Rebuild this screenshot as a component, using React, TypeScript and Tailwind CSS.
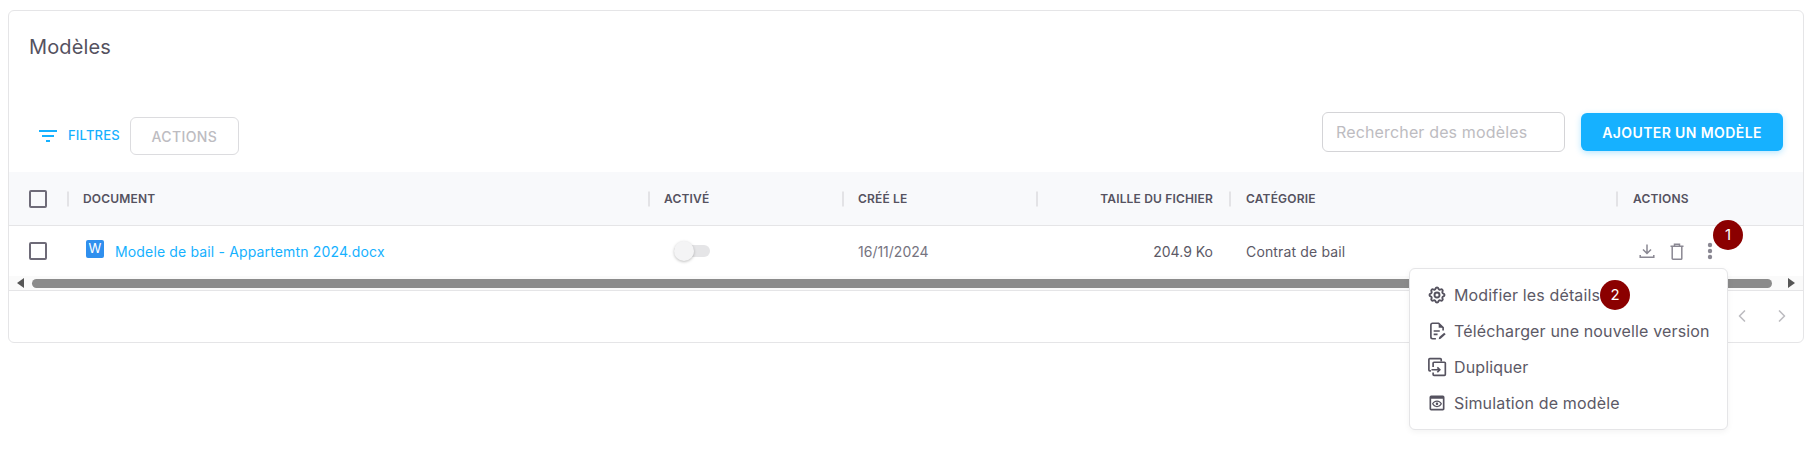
import { ChevronLeft, ChevronRight } from 'lucide-react';
import { MdFilterList, MdOutlinePreview } from 'react-icons/md';
import { TbSettings } from 'react-icons/tb';

const COLUMNS = 'grid grid-cols-[58px_581px_194px_194px_193px_387px_1fr]';

const HEADERS = [
  { label: 'DOCUMENT', cell: 'px-[16px]' },
  { label: 'ACTIVÉ', cell: 'px-[16px]' },
  { label: 'CRÉÉ LE', cell: 'px-[16px]' },
  { label: 'TAILLE DU FICHIER', cell: 'px-[16px] text-right' },
  { label: 'CATÉGORIE', cell: 'px-[17px]' },
  { label: 'ACTIONS', cell: 'px-[17px]' },
];

function Divider() {
  return <span className="absolute left-0 top-1/2 h-[15px] w-[2px] -translate-y-1/2 bg-[#e3e3e6]" />;
}

function Checkbox() {
  return <span className="block h-[18px] w-[18px] rounded-[2px] border-2 border-[#6e6b78]" />;
}

function EditFileIcon() {
  return (
    <svg width="20" height="20" viewBox="0 0 18 18" fill="none" stroke="#55525f" strokeWidth="1.5">
      <path d="M8 16H5a1.500 1.500 0 0 1-1.500-1.500v-11A1.500 1.500 0 0 1 5 2h5.500l4 4v2.500" strokeLinejoin="round" />
      <path d="M10.500 2l4 4h-4z" fill="#55525f" stroke="none" />
      <path d="M6 9h5.500M6 12h3.500" />
      <path d="M10.500 16.500l.5-2 4.500-4 1.300 1.400-4.500 4z" fill="#55525f" stroke="none" />
    </svg>
  );
}

function DuplicateIcon() {
  return (
    <svg width="20" height="20" viewBox="0 0 18 18" fill="none" stroke="#55525f" strokeWidth="1.500">
      <path d="M3.500 12.500H2.500a.8.8 0 0 1-.8-.8V2.300a.8.8 0 0 1 .8-.8h9.500a.8.8 0 0 1 .8.8V4" />
      <path d="M5.500 9V5.500a.8.8 0 0 1 .8-.8h9.400a.8.8 0 0 1 .8.8v10.200a.8.8 0 0 1-.8.8H6.300a.8.8 0 0 1-.8-.8V14" />
      <path d="M4 11.500h7.500M9.300 9.300l2.200 2.200-2.200 2.200" />
    </svg>
  );
}

function DownloadIcon() {
  return (
    <svg width="16" height="16" viewBox="0 0 16 16" fill="none" stroke="#8a8893" strokeWidth="1.500" className="ml-[23px]">
      <path d="M8 1.500v8.500M4 6.500L8 10.500l4-4M1.200 12v2.300h13.600V12" />
    </svg>
  );
}

function TrashIcon() {
  return (
    <svg width="14" height="17" viewBox="0 0 14 17" fill="none" stroke="#8a8893" strokeWidth="1.500" className="ml-[15px]">
      <path d="M.5 3.200h13M4.500 3V1.300h5V3" />
      <path d="M2.200 3.200v12.200a.8.8 0 0 0 .8.8h8a.8.8 0 0 0 .8-.8V3.200" />
    </svg>
  );
}

function DotsIcon() {
  return (
    <svg width="6" height="18" viewBox="0 0 6 18" fill="#8a8893" className="ml-[23px]">
      <circle cx="3" cy="3" r="2.200" />
      <circle cx="3" cy="9" r="2.200" />
      <circle cx="3" cy="15" r="2.200" />
    </svg>
  );
}

function Badge({ n, className }: { n: number; className: string }) {
  return (
    <span className={`absolute flex h-[30px] w-[30px] items-center justify-center rounded-full bg-[#8b0000] text-[15px] text-white ${className}`}>
      {n}
    </span>
  );
}

const MENU = [
  { label: 'Modifier les détails', icon: <TbSettings size={20} color="#55525f" strokeWidth={2.3} /> },
  { label: 'Télécharger une nouvelle version', icon: <EditFileIcon /> },
  { label: 'Dupliquer', icon: <DuplicateIcon /> },
  { label: 'Simulation de modèle', icon: <MdOutlinePreview size={22} color="#55525f" /> },
];

export default function App() {
  return (
    <div className="h-[471px] bg-white p-2 pt-[10px] font-['Inter',sans-serif] text-[#5c5966]">
      <div className="relative h-[333px] w-[1796px] rounded-md border border-[#e5e5e7] bg-white">
        <h1 className="pl-[20px] pt-[22px] text-[20px] leading-[28px] font-normal tracking-[0.15px] text-[#55525f]">Modèles</h1>

        {/* Toolbar */}
        <div className="mt-[51px] flex h-[43px] justify-between pl-[27px] pr-[20px]">
          <div className="flex items-center self-end">
            <MdFilterList size={24} color="#16b1ff" />
            <span className="ml-[8px] text-[13px] font-medium tracking-[0.2px] text-[#16b1ff]">FILTRES</span>
            <button className="ml-[10px] h-[38px] w-[109px] rounded-md border border-[#dcdcdf] text-[14px] font-medium tracking-[0.4px] text-[#bdbcc1]">
              ACTIONS
            </button>
          </div>
          <div className="flex items-center self-start gap-4">
            <div className="flex h-[40px] w-[243px] items-center rounded-md border border-[#d4d4d7] px-[13px] text-[16px] tracking-[0.15px] text-[#bdbcc1]">
              Rechercher des modèles
            </div>
            <button className="h-[38px] w-[202px] rounded-md bg-[#16b1ff] text-[14px] font-semibold tracking-[0.4px] text-white shadow-[0_2px_6px_rgba(22,177,255,0.3)]">
              AJOUTER UN MODÈLE
            </button>
          </div>
        </div>

        {/* Table header */}
        <div className={`${COLUMNS} mt-[17px] h-[54px] items-center border-b border-[#e5e5e7] bg-[#f8f9fb]`}>
          <div className="pl-[20px]">
            <Checkbox />
          </div>
          {HEADERS.map(h => (
            <div key={h.label} className={`relative text-[12px] font-semibold tracking-[0.17px] text-[#55525f] ${h.cell}`}>
              <Divider />
              {h.label}
            </div>
          ))}
        </div>

        {/* Row */}
        <div className={`${COLUMNS} h-[50px] items-center text-[14px]`}>
          <div className="pl-[20px]">
            <Checkbox />
          </div>
          <div className="flex items-center pl-[19px]">
            <span className="mt-[-4px] flex h-[18px] w-[18px] items-center justify-center rounded-[2px] bg-[#2f8fee] text-[13px] text-white">W</span>
            <span className="ml-[11px] tracking-[0.15px] text-[#16b1ff]">Modele de bail - Appartemtn 2024.docx</span>
          </div>
          <div className="pl-[26px]">
            <span className="relative block h-[12px] w-[36px] rounded-full bg-[#e5e5e7]">
              <span className="absolute -top-[4px] left-0 h-[20px] w-[20px] rounded-full bg-[#f4f4f5] shadow-[0_1px_3px_rgba(0,0,0,0.25)]" />
            </span>
          </div>
          <div className="px-[16px] text-[#76747f]">16/11/2024</div>
          <div className="px-[16px] text-right">204.9 Ko</div>
          <div className="px-[17px] tracking-[0.15px]">Contrat de bail</div>
          <div className="flex items-center">
            <DownloadIcon />
            <TrashIcon />
            <DotsIcon />
          </div>
        </div>

        {/* Scrollbar */}
        <div className="flex h-[15px] items-center border-b border-[#e5e5e7] bg-[#fafafa] px-[8px]">
          <span className="h-0 w-0 border-y-[5px] border-r-[7px] border-y-transparent border-r-[#555]" />
          <span className="ml-[8px] mr-[16px] h-[9px] flex-1 rounded-full bg-[#8b8b8b]" />
          <span className="h-0 w-0 border-y-[5px] border-l-[7px] border-y-transparent border-l-[#555]" />
        </div>

        {/* Pagination */}
        <div className="flex h-[50px] items-center justify-end gap-[20px] pr-[11px]">
          <ChevronLeft size={20} color="#bdbcc1" />
          <ChevronRight size={20} color="#bdbcc1" />
        </div>

        {/* Row menu */}
        <div className="absolute left-[1400px] top-[257px] flex h-[162px] w-[319px] flex-col justify-center rounded-md border border-[#e5e5e7] bg-white shadow-[0_2px_6px_rgba(0,0,0,0.05)]">
          {MENU.map(m => (
            <div key={m.label} className="flex h-[36px] items-center pl-[17px]">
              <span className="flex w-[20px] justify-center">{m.icon}</span>
              <span className="ml-[7px] text-[16px] tracking-[0.15px] text-[#5c5966]">{m.label}</span>
            </div>
          ))}
        </div>

        <Badge n={1} className="left-[1704px] top-[209px]" />
        <Badge n={2} className="left-[1591px] top-[269px]" />
      </div>
    </div>
  );
}
